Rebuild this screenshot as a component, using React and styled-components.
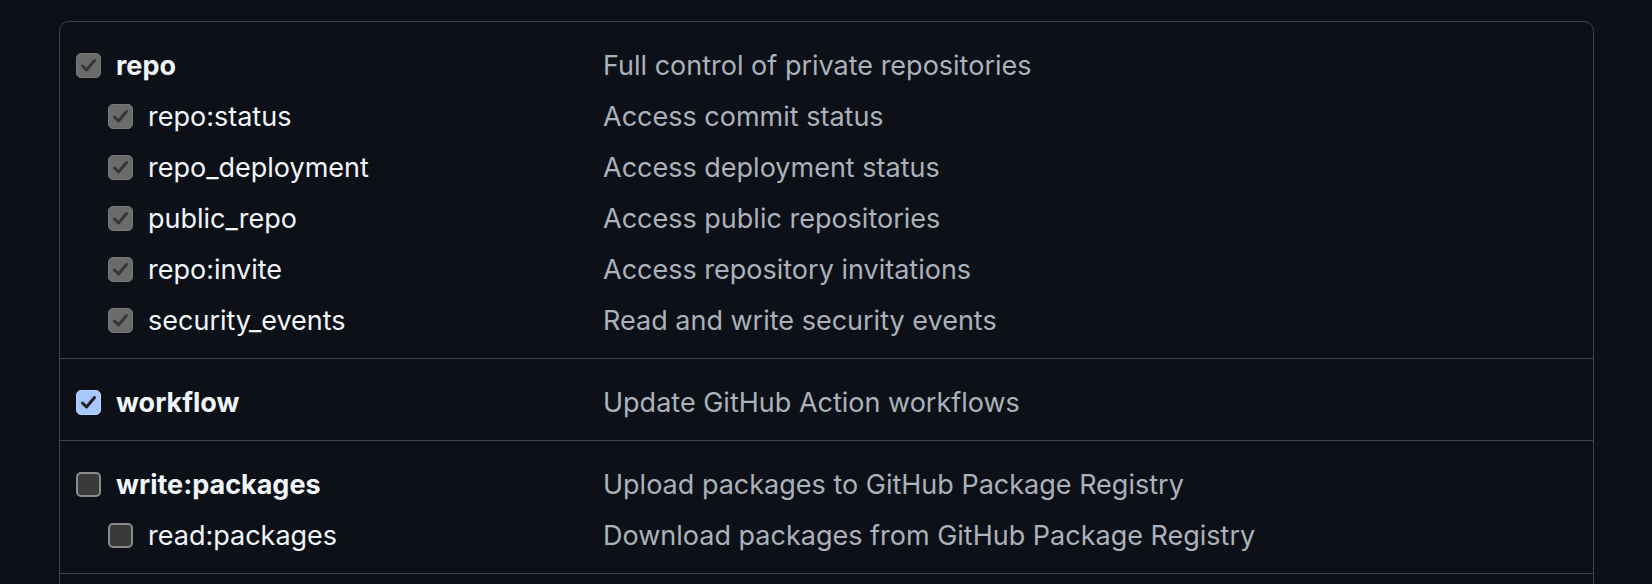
import React from 'react';
import styled, { createGlobalStyle } from 'styled-components';

const GlobalStyle = createGlobalStyle`
  html, body {
    margin: 0;
    background: #0d1117;
    overflow: hidden;
  }
  body {
    font-family: Inter, "Noto Sans", "Liberation Sans", sans-serif;
    -webkit-font-smoothing: antialiased;
  }
`;

const Page = styled.div`
  padding: 21px 0 0 59px;
  height: 584px;
  box-sizing: border-box;
`;

const Panel = styled.div`
  width: 1535px;
  height: 700px;
  box-sizing: border-box;
  border: 1px solid #3d444d;
  border-radius: 10px;
`;

const Section = styled.div`
  padding: 18px 0 12px;
  & + & {
    border-top: 1px solid #3d444d;
  }
`;

const Row = styled.div`
  display: grid;
  grid-template-columns: 527px 1fr;
  align-items: center;
  height: 51px;
  padding-left: 16px;
`;

const Label = styled.label`
  display: flex;
  align-items: center;
  gap: 15px;
  padding-left: ${p => (p.$sub ? '32px' : '0')};
  color: #f0f6fc;
  font-size: 27px;
  font-weight: ${p => (p.$sub ? 400 : 700)};
`;

const Desc = styled.span`
  color: #aab2bb;
  font-size: 27px;
`;

const boxColors = {
  locked: { bg: '#6b6b6b', border: '#787878', mark: '#363636' },
  on: { bg: '#a8c7fa', border: '#b8d2fb', mark: '#1f2328' },
  off: { bg: '#3a3a3a', border: '#8a8a8a', mark: 'transparent' },
};

const Box = styled.span`
  flex: none;
  width: 25px;
  height: 25px;
  box-sizing: border-box;
  border-radius: 5px;
  border: ${p => (p.$state === 'off' ? '2px' : '1px')} solid ${p => boxColors[p.$state].border};
  background: ${p => boxColors[p.$state].bg};
  display: flex;
  align-items: center;
  justify-content: center;
`;

const Check = ({ state }) => (
  <Box $state={state}>
    {state !== 'off' && (
      <svg width="21" height="21" viewBox="0 0 21 21">
        <path
          d="M4.5 11 L8.5 15 L16.5 5.5"
          fill="none"
          stroke={boxColors[state].mark}
          strokeWidth="3"
          strokeLinecap="round"
          strokeLinejoin="round"
        />
      </svg>
    )}
  </Box>
);

const sections = [
  [
    { name: 'repo', desc: 'Full control of private repositories', state: 'locked' },
    { name: 'repo:status', desc: 'Access commit status', state: 'locked', sub: true },
    { name: 'repo_deployment', desc: 'Access deployment status', state: 'locked', sub: true },
    { name: 'public_repo', desc: 'Access public repositories', state: 'locked', sub: true },
    { name: 'repo:invite', desc: 'Access repository invitations', state: 'locked', sub: true },
    { name: 'security_events', desc: 'Read and write security events', state: 'locked', sub: true },
  ],
  [{ name: 'workflow', desc: 'Update GitHub Action workflows', state: 'on' }],
  [
    { name: 'write:packages', desc: 'Upload packages to GitHub Package Registry', state: 'off' },
    { name: 'read:packages', desc: 'Download packages from GitHub Package Registry', state: 'off', sub: true },
  ],
  [],
];

export default function App() {
  return (
    <Page>
      <GlobalStyle />
      <Panel>
        {sections.map((rows, i) => (
          <Section key={i}>
            {rows.map(r => (
              <Row key={r.name}>
                <Label $sub={r.sub}>
                  <Check state={r.state} />
                  {r.name}
                </Label>
                <Desc>{r.desc}</Desc>
              </Row>
            ))}
          </Section>
        ))}
      </Panel>
    </Page>
  );
}
